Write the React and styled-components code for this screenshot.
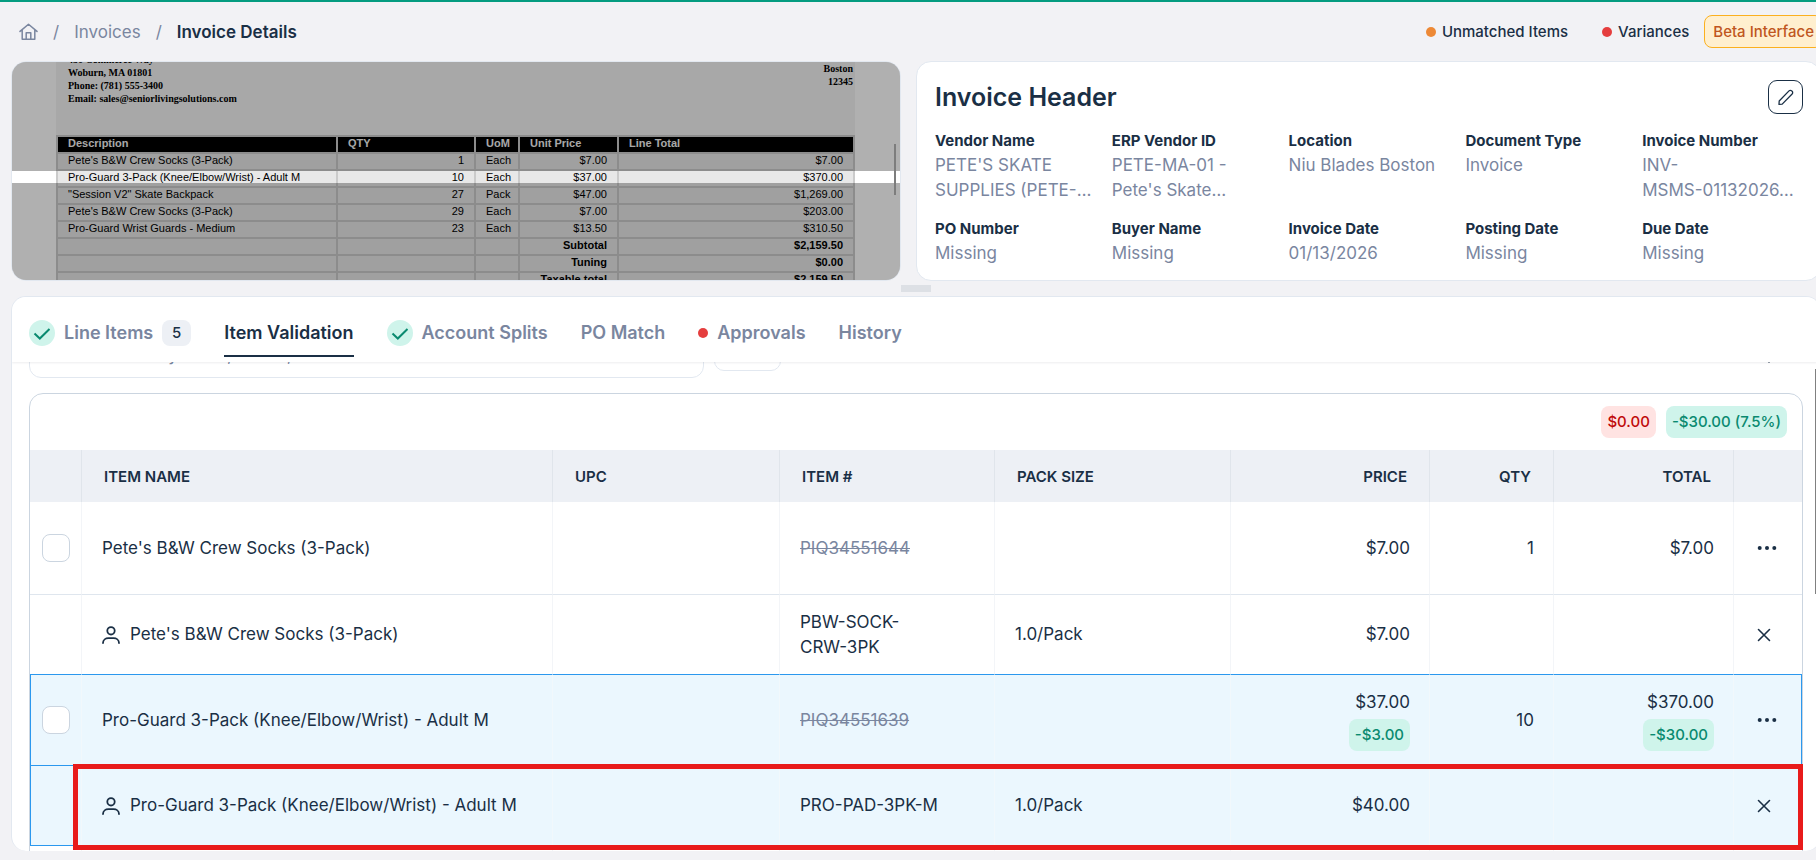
import React from "react";
import styled, { createGlobalStyle, css } from "styled-components";

const GlobalStyle = createGlobalStyle`
  *, *::before, *::after { box-sizing: border-box; }
  html, body { margin: 0; padding: 0; }
  body {
    background: #f2f2f5;
    color: #1a2f45;
    font-family: Inter, "Liberation Sans", sans-serif;
    font-size: 17px;
    line-height: 25px;
    overflow: hidden;
  }
  button, input { font: inherit; color: inherit; }
  a { color: inherit; text-decoration: none; }
`;

const Page = styled.div`
  display: flex;
  flex-direction: column;
  width: calc(100% + 16px);
  height: 100vh;
  min-height: 600px;
  padding: 0 11px 9px 11px;
  border-top: 2px solid #049c80;
`;

/* ---------- top bar ---------- */

const TopBar = styled.header`
  display: flex;
  align-items: center;
  flex: none;
  height: 59px;
  margin-right: -2px;
  padding: 0 0 0 8px;
`;

const Breadcrumbs = styled.nav`
  display: flex;
  align-items: center;
  gap: 15px;
  margin-right: auto;
  padding-top: 1px;
  color: #7a869f;
  svg { display: block; }
`;

const Crumb = styled.a`
  color: ${(p) => (p.$current ? "#1a2f45" : "#7a869f")};
  font-weight: ${(p) => (p.$current ? 600 : 400)};
`;

const Legend = styled.span`
  display: flex;
  align-items: center;
  gap: 6px;
  margin-right: ${(p) => (p.$last ? 15 : 34)}px;
  font-size: 15px;
  font-weight: 500;
`;

const Dot = styled.span`
  flex: none;
  width: 10px;
  height: 10px;
  border-radius: 50%;
  background: ${(p) => p.$color};
`;

const BetaBadge = styled.span`
  padding: 3px 8px;
  border: 1px solid #fbb01f;
  border-radius: 8px;
  background: #ffefcf;
  color: #c05621;
  font-size: 15px;
  font-weight: 500;
`;

/* ---------- upper panes ---------- */

const Panes = styled.div`
  display: grid;
  grid-template-columns: minmax(0, 890fr) minmax(0, 905fr);
  gap: 15px;
  flex: none;
`;

const Preview = styled.section`
  position: relative;
  overflow: hidden;
  height: 220px;
  border: 1px solid #e2e8f0;
  border-radius: 15px;
  background: #fff;
`;

const Sheet = styled.div`
  margin: 0 45px 0 44px;
  background: #f3f3f3;
  color: #000;
`;

const Letterhead = styled.div`
  display: flex;
  justify-content: space-between;
  height: 73px;
  padding: 0 2px 0 12px;
  font: bold 10px/13px "Liberation Serif", serif;
`;

const Address = styled.address`
  margin-top: ${(p) => (p.$right ? 0 : -9)}px;
  font-style: normal;
  text-align: ${(p) => (p.$right ? "right" : "left")};
`;

const SheetTable = styled.table`
  width: 100%;
  table-layout: fixed;
  border-collapse: collapse;
  font: 11px/13px "Liberation Sans", Arial, sans-serif;
  white-space: nowrap;
  th, td {
    height: 17px;
    padding: 0 10px 2px;
    border: 2px solid #cbcbcb;
    background: #e8e8e8;
    text-align: right;
  }
  th {
    background: #000;
    color: #f3f3f3;
    text-align: left;
  }
  td:nth-child(1) { text-align: left; }
  td:nth-child(3) { text-align: left; }
`;

const SheetCol = styled.col`
  width: ${(p) => p.$w}px;
`;

const SheetRow = styled.tr`
  font-weight: ${(p) => (p.$bold ? 700 : 400)};
`;

const Spotlight = styled.div`
  position: absolute;
  top: 109px;
  left: 0;
  right: 0;
  height: 12px;
  box-shadow: 0 0 0 2000px rgba(0, 0, 0, 0.31);
`;

const PreviewThumb = styled.div`
  position: absolute;
  top: 82px;
  right: 4px;
  width: 2px;
  height: 51px;
  background: #7d7d7d;
`;

const HeaderCard = styled.section`
  min-height: 220px;
  padding: 18px 17px 14px 18px;
  border: 1px solid #e2e8f0;
  border-radius: 15px;
  background: #fff;
`;

const CardHead = styled.div`
  display: flex;
  align-items: center;
  justify-content: space-between;
  height: 34px;
  margin-bottom: 15px;
`;

const CardTitle = styled.h1`
  margin: 0;
  font-size: 25px;
  font-weight: 600;
`;

const EditButton = styled.button`
  display: flex;
  align-items: center;
  justify-content: center;
  width: 35px;
  height: 34px;
  padding: 0;
  border: 1px solid #1a2f45;
  border-radius: 9px;
  background: #fff;
`;

const Fields = styled.dl`
  display: grid;
  grid-template-columns: repeat(5, minmax(0, 1fr));
  gap: 14px 16px;
  margin: 0;
`;

const FieldName = styled.dt`
  font-size: 15px;
  line-height: 24px;
  font-weight: 700;
`;

const FieldValue = styled.dd`
  margin: 0;
  color: #7a869f;
`;

const NoWrap = styled.span`
  white-space: nowrap;
`;

const ResizeStrip = styled.div`
  display: flex;
  align-items: center;
  justify-content: center;
  flex: none;
  height: 15px;
`;

const Handle = styled.div`
  width: 30px;
  height: 7px;
  background: #dde0e5;
`;

/* ---------- lower panel ---------- */

const Panel = styled.main`
  position: relative;
  display: flex;
  flex-direction: column;
  flex: 1;
  min-height: 0;
  overflow: hidden;
  border: solid #e2e8f0;
  border-width: 1px 1px 0;
  border-radius: 15px;
  background: #fff;
`;

const Tabs = styled.nav`
  position: relative;
  z-index: 2;
  display: flex;
  gap: 33px;
  flex: none;
  height: 65px;
  padding: 12px 17px 0;
  background: #fff;
  box-shadow: 0 1px 2px rgba(20, 30, 50, 0.08);
`;

const Tab = styled.button`
  display: flex;
  align-items: center;
  gap: 9px;
  height: 48px;
  padding: 1px 0 0;
  border: 0;
  border-bottom: 2px solid ${(p) => (p.$active ? "#1a2f45" : "transparent")};
  background: none;
  color: ${(p) => (p.$active ? "#1a2f45" : "#7a869f")};
  font-size: 18px;
  font-weight: 600;
`;

const CheckCircle = styled.span`
  display: flex;
  align-items: center;
  justify-content: center;
  width: 26px;
  height: 26px;
  border-radius: 50%;
  background: #cff4eb;
`;

const Count = styled.span`
  width: 29px;
  border-radius: 8px;
  background: #edf0f5;
  color: #1a2f45;
  font-size: 15px;
  line-height: 26px;
  font-weight: 500;
  text-align: center;
`;

const Scrolled = styled.div`
  flex: 1;
  min-height: 0;
  padding: 0 17px;
  overflow: hidden;
`;

const Toolbar = styled.div`
  display: flex;
  align-items: flex-start;
  gap: 10px;
  margin: -35px 0 15px;
`;

const SearchInput = styled.input`
  width: 675px;
  height: 51px;
  padding: 4px 28px 0;
  border: 1px solid #e2e8f0;
  border-radius: 12px;
  background: #fff;
  &::placeholder { color: #7a869f; opacity: 1; }
`;

const ToolButton = styled.button`
  width: 67px;
  height: 44px;
  border: 1px solid #e2e8f0;
  border-radius: 10px;
  background: #fff;
`;

const GhostButton = styled.button`
  margin: 0 28px 0 auto;
  padding: 14px 0 0;
  border: 0;
  background: none;
  svg { display: block; }
`;

const TableCard = styled.div`
  border: 1px solid #cbd5e0;
  border-radius: 14px;
  background: #fff;
`;

const Summary = styled.div`
  display: flex;
  justify-content: flex-end;
  gap: 10px;
  padding: 12px 15px;
`;

const Pill = styled.span`
  display: inline-block;
  padding: 0 6px;
  border-radius: 8px;
  background: ${(p) => (p.$tone === "bad" ? "#ffe3e2" : "#cff4eb")};
  color: ${(p) => (p.$tone === "bad" ? "#bf0b0b" : "#0a8a70")};
  font-size: 15px;
  line-height: 32px;
  font-weight: 500;
`;

const ItemsTable = styled.table`
  width: 100%;
  table-layout: fixed;
  border-collapse: separate;
  border-spacing: 0;
`;

const Col = styled.col`
  width: ${(p) => (p.$w ? `${p.$w}px` : "auto")};
`;

const HeadCell = styled.th`
  height: 52px;
  padding: 0 22px;
  border-right: 1px solid #e0e5eb;
  background: #edf0f5;
  font-size: 15px;
  font-weight: 600;
  text-align: ${(p) => (p.$right ? "right" : "left")};
  &:last-child { border-right: 0; }
`;

const Cell = styled.td`
  padding: 0 19px 0 20px;
  border-right: 1px solid #f3f5f8;
  text-align: ${(p) => (p.$right ? "right" : "left")};
  &:first-child { padding: 0 0 0 12px; }
  &:last-child { padding: 0 0 0 23px; border-right: 0; }
`;

const Row = styled.tr`
  position: relative;
  height: ${(p) => p.$h}px;
  ${(p) => p.$rule && css`
    ${Cell} { border-bottom: 1px solid #dfe6ee; }
  `}
  ${(p) => p.$selected && css`
    ${Cell} { background: #ebf7fe; border-bottom: 1px solid #2b98ee; border-right-color: #f1f8fc; }
    ${Cell}:first-child { border-left: 1px solid #2b98ee; padding-left: 11px; }
    ${Cell}:last-child { border-right: 1px solid #2b98ee; }
  `}
  ${(p) => p.$first && css`
    ${Cell} { border-top: 1px solid #2b98ee; }
  `}
`;

/* Frame laid over the row that holds it, wider than the row by its own border. */
const Callout = styled.span`
  position: absolute;
  z-index: 1;
  inset: -2px -1px -4px 43px;
  border: 5px solid #e81b1b;
  pointer-events: none;
`;

const Check = styled.input`
  display: block;
  appearance: none;
  width: 28px;
  height: 28px;
  margin: 0;
  border: 1px solid #cbd5e0;
  border-radius: 8px;
  background: #fff;
`;

const Struck = styled.del`
  color: #7a869f;
`;

const Matched = styled.span`
  display: flex;
  align-items: center;
  gap: 10px;
  svg { flex: none; }
`;

const Amount = styled.div`
  display: flex;
  flex-direction: column;
  align-items: flex-end;
  gap: 4px;
`;

const IconButton = styled.button`
  display: block;
  padding: 0;
  border: 0;
  background: none;
  svg { display: block; }
`;

const ScrollThumb = styled.div`
  position: absolute;
  z-index: 3;
  top: 72px;
  right: 1px;
  width: 4px;
  height: 225px;
  background: #808080;
`;

/* ---------- icons ---------- */

const HomeIcon = () => (
  <svg width="19" height="18" viewBox="0 0 19 18" fill="none" stroke="currentColor" strokeWidth="1.5" strokeLinecap="round" strokeLinejoin="round">
    <path d="M1 8.400 9.500 1.200 18 8.400M3.200 7v9.300h12.600V7M7.200 16V9.800h4.600V16" />
  </svg>
);

const PencilIcon = () => (
  <svg width="18" height="18" viewBox="0 0 18 18" fill="none" stroke="currentColor" strokeWidth="1.300" strokeLinejoin="round">
    <path d="M2 16.400 2.200 13 12 2.900a1.900 1.900 0 0 1 2.700 0l.4.400a1.900 1.900 0 0 1 0 2.700L5.200 16.100Z" />
  </svg>
);

const CheckIcon = () => (
  <svg width="18" height="14" viewBox="0 0 18 14" fill="none" stroke="#0a8a70" strokeWidth="2" strokeLinecap="butt" strokeLinejoin="miter">
    <path d="M1.500 7.500 6.800 12.500 16.500 3" />
  </svg>
);

const PersonIcon = () => (
  <svg width="18" height="18" viewBox="0 0 18 18" fill="none" stroke="currentColor" strokeWidth="1.800" strokeLinecap="round">
    <circle cx="9" cy="4.800" r="3.700" />
    <path d="M1 17c0-3.200 2.800-4.800 5.400-4.800h5.200c2.600 0 5.400 1.600 5.400 4.800" />
  </svg>
);

const DotsIcon = () => (
  <svg width="20" height="5" viewBox="0 0 20 5" fill="currentColor">
    <circle cx="2.700" cy="2" r="2" />
    <circle cx="10" cy="2" r="2" />
    <circle cx="17.300" cy="2" r="2" />
  </svg>
);

const CloseIcon = () => (
  <svg width="14" height="14" viewBox="0 0 14 14" fill="none" stroke="currentColor" strokeWidth="1.600" strokeLinecap="round">
    <path d="M1.500 1.500l11 11M12.500 1.500l-11 11" />
  </svg>
);

const ChevronIcon = () => (
  <svg width="12" height="22" viewBox="0 0 12 22" fill="none" stroke="currentColor" strokeWidth="2" strokeLinecap="round">
    <path d="M2 16l4 4.500L10 16" />
  </svg>
);

/* ---------- data ---------- */

const sheetRows = [
  ["Pete's B&W Crew Socks (3-Pack)", "1", "Each", "$7.00", "$7.00"],
  ["Pro-Guard 3-Pack (Knee/Elbow/Wrist) - Adult M", "10", "Each", "$37.00", "$370.00"],
  ["\"Session V2\" Skate Backpack", "27", "Pack", "$47.00", "$1,269.00"],
  ["Pete's B&W Crew Socks (3-Pack)", "29", "Each", "$7.00", "$203.00"],
  ["Pro-Guard Wrist Guards - Medium", "23", "Each", "$13.50", "$310.50"],
  ["", "", "", "Subtotal", "$2,159.50"],
  ["", "", "", "Tuning", "$0.00"],
  ["", "", "", "Taxable total", "$2,159.50"],
];

const fields = [
  ["Vendor Name", "PETE'S SKATE SUPPLIES (PETE-…"],
  ["ERP Vendor ID", "PETE-MA-01 - Pete's Skate…"],
  ["Location", "Niu Blades Boston"],
  ["Document Type", "Invoice"],
  ["Invoice Number", "INV-MSMS-01132026…"],
  ["PO Number", "Missing"],
  ["Buyer Name", "Missing"],
  ["Invoice Date", "01/13/2026"],
  ["Posting Date", "Missing"],
  ["Due Date", "Missing"],
];

const columns = [
  { label: "", w: 52 },
  { label: "ITEM NAME" },
  { label: "UPC", w: 227 },
  { label: "ITEM #", w: 215 },
  { label: "PACK SIZE", w: 236 },
  { label: "PRICE", w: 199, right: true },
  { label: "QTY", w: 124, right: true },
  { label: "TOTAL", w: 180, right: true },
  { label: "", w: 68 },
];

const items = [
  {
    h: 93, rule: true, name: "Pete's B&W Crew Socks (3-Pack)", code: "PIQ34551644",
    price: "$7.00", qty: "1", total: "$7.00",
  },
  {
    h: 79, match: true, name: "Pete's B&W Crew Socks (3-Pack)", code: "PBW-SOCK-CRW-3PK",
    pack: "1.0/Pack", price: "$7.00",
  },
  {
    h: 92, selected: true, first: true, name: "Pro-Guard 3-Pack (Knee/Elbow/Wrist) - Adult M",
    code: "PIQ34551639", price: "$37.00", priceDiff: "-$3.00", qty: "10",
    total: "$370.00", totalDiff: "-$30.00",
  },
  {
    h: 80, match: true, selected: true, callout: true,
    name: "Pro-Guard 3-Pack (Knee/Elbow/Wrist) - Adult M", code: "PRO-PAD-3PK-M",
    pack: "1.0/Pack", price: "$40.00",
  },
];

/* Keeps a number together with the letters and hyphen before it. */
function Code({ text }) {
  const at = text.search(/[A-Z]+-\d\S*$/);
  if (at < 0) return text;
  return <>{text.slice(0, at)}<NoWrap>{text.slice(at)}</NoWrap></>;
}

function Money({ value, diff }) {
  if (!diff) return value || null;
  return (
    <Amount>
      <span>{value}</span>
      <Pill>{diff}</Pill>
    </Amount>
  );
}

function ItemRow({ item }) {
  return (
    <Row $h={item.h} $rule={item.rule} $selected={item.selected} $first={item.first}>
      <Cell>{!item.match && <Check type="checkbox" aria-label={`Select ${item.name}`} />}</Cell>
      <Cell>
        {item.match ? <Matched><PersonIcon />{item.name}</Matched> : item.name}
        {item.callout && <Callout />}
      </Cell>
      <Cell />
      <Cell>{item.match ? <Code text={item.code} /> : <Struck>{item.code}</Struck>}</Cell>
      <Cell>{item.pack}</Cell>
      <Cell $right><Money value={item.price} diff={item.priceDiff} /></Cell>
      <Cell $right>{item.qty}</Cell>
      <Cell $right><Money value={item.total} diff={item.totalDiff} /></Cell>
      <Cell>
        <IconButton aria-label={item.match ? "Remove match" : "More actions"}>
          {item.match ? <CloseIcon /> : <DotsIcon />}
        </IconButton>
      </Cell>
    </Row>
  );
}

export default function App() {
  return (
    <>
      <GlobalStyle />
      <Page>
        <TopBar>
          <Breadcrumbs aria-label="Breadcrumb">
            <Crumb href="#home" aria-label="Home"><HomeIcon /></Crumb>
            <span>/</span>
            <Crumb href="#invoices">Invoices</Crumb>
            <span>/</span>
            <Crumb href="#details" $current>Invoice Details</Crumb>
          </Breadcrumbs>
          <Legend><Dot $color="#ed8936" />Unmatched Items</Legend>
          <Legend $last><Dot $color="#e53e3e" />Variances</Legend>
          <BetaBadge>Beta Interface</BetaBadge>
        </TopBar>

        <Panes>
          <Preview>
            <Sheet>
              <Letterhead>
                <Address>
                  450 Commerce Way<br />
                  Woburn, MA 01801<br />
                  Phone: (781) 555-3400<br />
                  Email: sales@seniorlivingsolutions.com
                </Address>
                <Address $right>
                  Boston<br />
                  12345
                </Address>
              </Letterhead>
              <SheetTable>
                <colgroup>
                  {[280, 138, 44, 99, 236].map((w) => <SheetCol key={w} $w={w} />)}
                </colgroup>
                <thead>
                  <SheetRow $bold>
                    <th>Description</th><th>QTY</th><th>UoM</th><th>Unit Price</th><th>Line Total</th>
                  </SheetRow>
                </thead>
                <tbody>
                  {sheetRows.map((row, i) => (
                    <SheetRow key={i} $bold={!row[0]}>
                      {row.map((text, j) => <td key={j}>{text}</td>)}
                    </SheetRow>
                  ))}
                </tbody>
              </SheetTable>
            </Sheet>
            <Spotlight />
            <PreviewThumb />
          </Preview>

          <HeaderCard>
            <CardHead>
              <CardTitle>Invoice Header</CardTitle>
              <EditButton aria-label="Edit invoice header"><PencilIcon /></EditButton>
            </CardHead>
            <Fields>
              {fields.map(([name, value]) => (
                <div key={name}>
                  <FieldName>{name}</FieldName>
                  <FieldValue><Code text={value} /></FieldValue>
                </div>
              ))}
            </Fields>
          </HeaderCard>
        </Panes>

        <ResizeStrip><Handle /></ResizeStrip>

        <Panel>
          <Tabs>
            <Tab><CheckCircle><CheckIcon /></CheckCircle>Line Items<Count>5</Count></Tab>
            <Tab $active>Item Validation</Tab>
            <Tab><CheckCircle><CheckIcon /></CheckCircle>Account Splits</Tab>
            <Tab>PO Match</Tab>
            <Tab><Dot $color="#e53e3e" />Approvals</Tab>
            <Tab>History</Tab>
          </Tabs>
          <Scrolled>
            <Toolbar>
              <SearchInput type="search" aria-label="Search items" placeholder="Search item by name, item #, or UPC" />
              <ToolButton aria-label="Filter" />
              <GhostButton aria-label="Expand"><ChevronIcon /></GhostButton>
            </Toolbar>
            <TableCard>
              <Summary>
                <Pill $tone="bad">$0.00</Pill>
                <Pill>-$30.00 (7.5%)</Pill>
              </Summary>
              <ItemsTable>
                <colgroup>
                  {columns.map((c, i) => <Col key={i} $w={c.w} />)}
                </colgroup>
                <thead>
                  <tr>
                    {columns.map((c, i) => <HeadCell key={i} $right={c.right}>{c.label}</HeadCell>)}
                  </tr>
                </thead>
                <tbody>
                  {items.map((item, i) => <ItemRow key={i} item={item} />)}
                  <Row $h={92}>
                    {columns.map((c, i) => <Cell key={i} />)}
                  </Row>
                </tbody>
              </ItemsTable>
            </TableCard>
          </Scrolled>
          <ScrollThumb />
        </Panel>
      </Page>
    </>
  );
}
